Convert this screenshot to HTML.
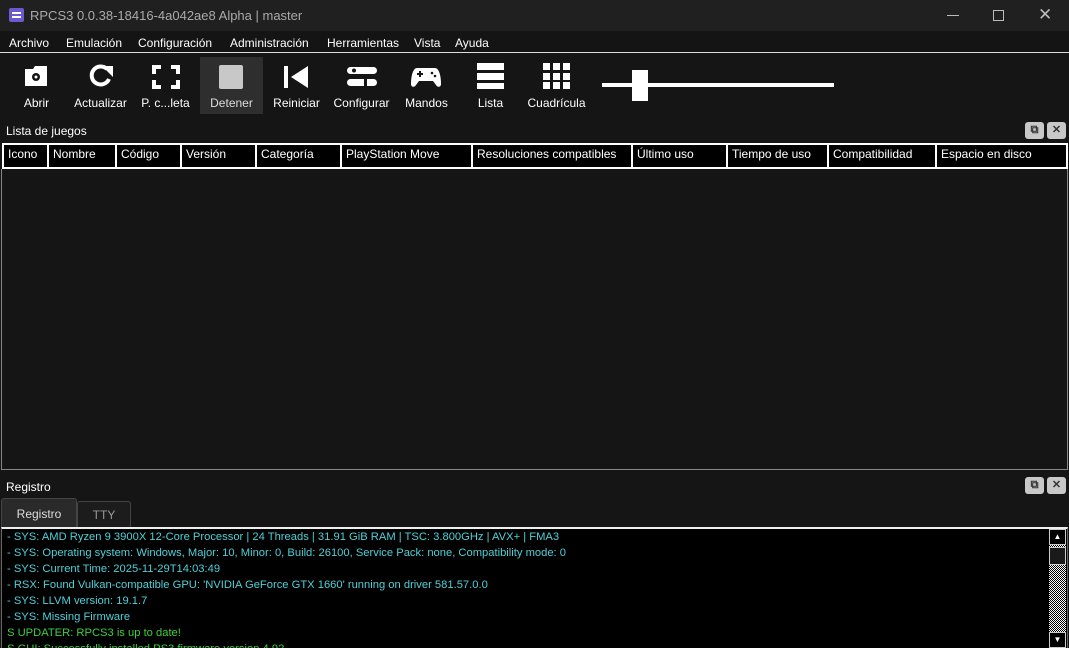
<!DOCTYPE html><html><head><style>
*{margin:0;padding:0;box-sizing:border-box}
html,body{width:1069px;height:648px;overflow:hidden}
body{background:#151515;font-family:"Liberation Sans",sans-serif;color:#fff;position:relative;font-size:12px}
.a{position:absolute}
.tb{left:0;top:0;width:1069px;height:31px;background:#202020;color:#aaa;font-size:13px}
.menu{top:32px;left:0;width:1069px;height:21px;background:#141414;border-bottom:1px solid #ddd}
.menu span{position:absolute;top:4px;font-size:12px}
.tool{top:57px;width:63px;height:57px;text-align:center;font-size:12px}
.tool .l{position:absolute;bottom:4px;width:100%;left:0}
.th{top:143px;height:26px;background:#000;border:2px solid #fff;border-right:none;font-size:12px;padding:2px 4px}
.lg{left:5px;font-size:11.2px;color:#4fd0d8;position:absolute;white-space:nowrap}
.btn{width:19px;height:17px;background:#c8c8c8;border-radius:3px;color:#333;font-size:11px;text-align:center;line-height:17px;font-weight:bold}
</style></head><body>
<div class="a tb">
<div class="a" style="left:9px;top:8px;width:15px;height:14px;background:#6a5acd;border-radius:2px"><div style="margin:4px 3px;height:6px;border-top:2px solid #fff;border-bottom:2px solid #fff"></div></div>
<div class="a" style="left:30px;top:8px">RPCS3 0.0.38-18416-4a042ae8 Alpha | master</div>
<div class="a" style="left:947px;top:15px;width:12px;border-top:1px solid #bbb"></div>
<div class="a" style="left:993px;top:10px;width:11px;height:11px;border:1px solid #bbb"></div>
<div class="a" style="left:1038px;top:5px;font-size:17px;color:#bbb">✕</div>
</div>
<div class="a menu">
<span style="left:9px">Archivo</span><span style="left:66px">Emulación</span><span style="left:138px">Configuración</span><span style="left:230px">Administración</span><span style="left:327px">Herramientas</span><span style="left:414px">Vista</span><span style="left:455px">Ayuda</span>
</div>
<div class="a tool" style="left:5px"><svg class="a" style="left:18px;top:8px" width="26" height="22"><path d="M2 4h8l2-3h12v20H2z" fill="#fff"/><circle cx="13" cy="12" r="4" fill="#151515"/><circle cx="13" cy="12" r="1.5" fill="#fff"/></svg><div class="l">Abrir</div></div>
<div class="a tool" style="left:69px"><svg class="a" style="left:18px;top:6px" width="28" height="26"><path d="M22 16a9 9 0 1 1-2-10" fill="none" stroke="#fff" stroke-width="4"/><path d="M15 3h11v11z" fill="#fff"/></svg><div class="l">Actualizar</div></div>
<div class="a tool" style="left:134px"><svg class="a" style="left:18px;top:8px" width="28" height="24"><path d="M2 9V2h7M19 2h7v7M26 15v7h-7M9 22H2v-7" fill="none" stroke="#fff" stroke-width="4"/></svg><div class="l">P. c...leta</div></div>
<div class="a tool" style="left:200px;background:#2e2e2e"><div class="a" style="left:19px;top:8px;width:24px;height:24px;background:#c8c8c8;border-radius:2px"></div><div class="l" style="color:#ddd">Detener</div></div>
<div class="a tool" style="left:265px"><svg class="a" style="left:18px;top:8px" width="26" height="24"><rect x="1" y="1" width="4" height="22" fill="#fff"/><path d="M25 1v22L8 12z" fill="#fff"/></svg><div class="l">Reiniciar</div></div>
<div class="a tool" style="left:330px"><svg class="a" style="left:16px;top:8px" width="32" height="24"><rect x="1" y="2" width="30" height="7" rx="3.5" fill="#fff"/><rect x="1" y="14" width="30" height="7" rx="3.5" fill="#fff"/><circle cx="8" cy="5.5" r="2" fill="#151515"/><rect x="18" y="13" width="3" height="9" fill="#151515"/></svg><div class="l">Configurar</div></div>
<div class="a tool" style="left:395px"><svg class="a" style="left:16px;top:9px" width="30" height="22"><path d="M6 2h18c4 0 6 8 6 16 0 3-3 4-5 1l-3-4H8l-3 4c-2 3-5 2-5-1 0-8 2-16 6-16z" fill="#fff"/><rect x="6" y="7" width="6" height="2" fill="#151515"/><rect x="8" y="5" width="2" height="6" fill="#151515"/><circle cx="21" cy="7" r="1.3" fill="#151515"/><circle cx="24" cy="10" r="1.3" fill="#151515"/></svg><div class="l">Mandos</div></div>
<div class="a tool" style="left:459px"><div class="a" style="left:18px;top:6px;width:27px;height:26px;background:linear-gradient(#fff 0 7px,transparent 7px 10px,#fff 10px 17px,transparent 17px 20px,#fff 20px)"></div><div class="l">Lista</div></div>
<div class="a tool" style="left:525px"><svg class="a" style="left:18px;top:6px" width="27" height="26"><g fill="#fff"><rect x="0" y="0" width="7" height="7"/><rect x="10" y="0" width="7" height="7"/><rect x="20" y="0" width="7" height="7"/><rect x="0" y="10" width="7" height="7"/><rect x="10" y="10" width="7" height="7"/><rect x="20" y="10" width="7" height="7"/><rect x="0" y="19" width="7" height="7"/><rect x="10" y="19" width="7" height="7"/><rect x="20" y="19" width="7" height="7"/></g></svg><div class="l">Cuadrícula</div></div>
<div class="a" style="left:602px;top:83px;width:232px;height:4px;background:#fff"></div>
<div class="a" style="left:632px;top:70px;width:16px;height:31px;background:#fff"></div>
<div class="a" style="left:6px;top:124px;font-size:12px">Lista de juegos</div>
<div class="a btn" style="left:1025px;top:122px">⧉</div><div class="a btn" style="left:1047px;top:122px">✕</div>
<div class="a th" style="left:2px;width:45px">Icono</div>
<div class="a th" style="left:47px;width:68px">Nombre</div>
<div class="a th" style="left:115px;width:65px">Código</div>
<div class="a th" style="left:180px;width:75px">Versión</div>
<div class="a th" style="left:255px;width:85px">Categoría</div>
<div class="a th" style="left:340px;width:131px">PlayStation Move</div>
<div class="a th" style="left:471px;width:160px">Resoluciones compatibles</div>
<div class="a th" style="left:631px;width:95px">Último uso</div>
<div class="a th" style="left:726px;width:101px">Tiempo de uso</div>
<div class="a th" style="left:827px;width:108px">Compatibilidad</div>
<div class="a th" style="left:935px;width:133px;border-right:2px solid #fff">Espacio en disco</div>
<div class="a" style="left:1px;top:169px;width:1067px;height:301px;border:1px solid #888;border-top:none;background:#151515"></div>
<div class="a" style="left:6px;top:480px">Registro</div>
<div class="a btn" style="left:1025px;top:477px">⧉</div><div class="a btn" style="left:1047px;top:477px">✕</div>
<div class="a" style="left:1px;top:498px;width:76px;height:30px;background:#2a2a2a;border:1px solid #444;border-bottom:none;border-radius:3px 3px 0 0;text-align:center;line-height:30px;color:#ddd">Registro</div>
<div class="a" style="left:77px;top:501px;width:54px;height:27px;background:#1c1c1c;border:1px solid #444;border-bottom:none;border-radius:3px 3px 0 0;text-align:center;line-height:27px;color:#999">TTY</div>
<div class="a" style="left:1px;top:527px;width:1067px;height:121px;overflow:hidden;background:#000;border-top:2px solid #eee;border-left:1px solid #666;border-right:1px solid #666">
<div class="lg" style="top:2px">- SYS: AMD Ryzen 9 3900X 12-Core Processor | 24 Threads | 31.91 GiB RAM | TSC: 3.800GHz | AVX+ | FMA3</div>
<div class="lg" style="top:18px">- SYS: Operating system: Windows, Major: 10, Minor: 0, Build: 26100, Service Pack: none, Compatibility mode: 0</div>
<div class="lg" style="top:34px">- SYS: Current Time: 2025-11-29T14:03:49</div>
<div class="lg" style="top:50px">- RSX: Found Vulkan-compatible GPU: 'NVIDIA GeForce GTX 1660' running on driver 581.57.0.0</div>
<div class="lg" style="top:66px">- SYS: LLVM version: 19.1.7</div>
<div class="lg" style="top:82px">- SYS: Missing Firmware</div>
<div class="lg" style="top:98px;color:#3ecf3e">S UPDATER: RPCS3 is up to date!</div>
<div class="lg" style="top:114px;color:#3ecf3e">S GUI: Successfully installed PS3 firmware version 4.92</div>
<div class="a" style="right:1px;top:0;width:17px;height:119px;background:repeating-conic-gradient(#fff 0 25%,#000 0 50%) 0 0/2px 2px">
<div style="height:16px;background:#000;border:1px solid #ccc;color:#fff;font-size:8px;text-align:center;line-height:14px">▲</div>
<div style="height:18px;margin-top:2px;background:#1a1a1a;border:1px solid #ccc"></div>
<div class="a" style="bottom:0;left:0;width:17px;height:16px;background:#000;border:1px solid #ccc;color:#fff;font-size:8px;text-align:center;line-height:14px">▼</div>
</div></div>
</body></html>
